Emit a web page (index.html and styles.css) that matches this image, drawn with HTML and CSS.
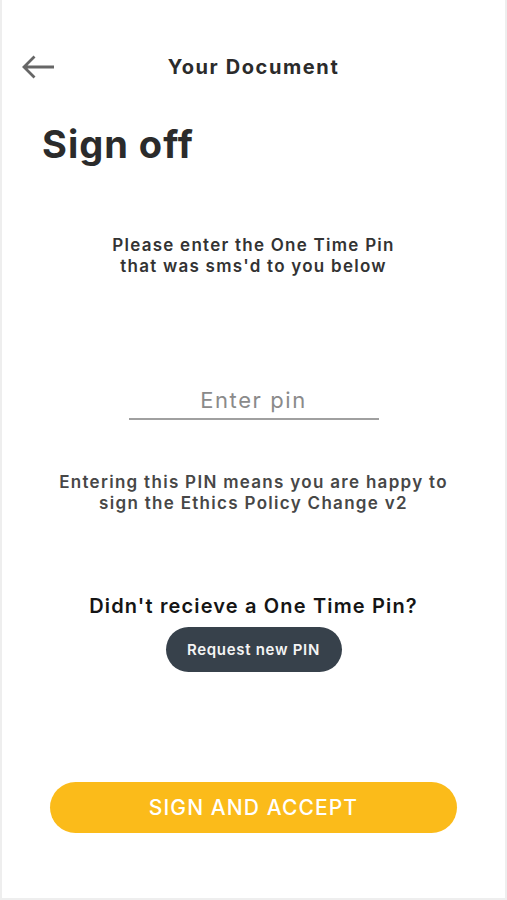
FILE: index.html
```html
<!DOCTYPE html>
<html lang="en">
<head>
    <meta charset="UTF-8">
    <meta name="viewport" content="width=device-width, initial-scale=1.0">
    <title>Sign off</title>
    <link rel="stylesheet" href="styles.css">
</head>
<body>
    <div class="screen">
        <header class="topbar">
            <button class="back" aria-label="Back">
                <svg width="32" height="24" viewBox="0 0 32 24">
                    <path d="M32 12H2.5M12.5 1.5L2 12l10.5 10.5" fill="none" stroke="#666" stroke-width="2.8"/>
                </svg>
            </button>
            <h1 class="topbar-title">Your Document</h1>
            <span class="spacer"></span>
        </header>

        <h2 class="page-title">Sign off</h2>

        <p class="intro">Please enter the One Time Pin<br>that was sms'd to you below</p>

        <div class="pin-field">
            <input type="text" id="pin" placeholder="Enter pin">
        </div>

        <p class="notice">Entering this PIN means you are happy to<br>sign the Ethics Policy Change v2</p>

        <p class="resend-label">Didn't recieve a One Time Pin?</p>
        <button class="resend">Request new PIN</button>

        <button class="accept">SIGN AND ACCEPT</button>
    </div>
</body>
</html>
```

FILE: styles.css
```css
* {
    margin: 0;
    padding: 0;
    box-sizing: border-box;
}

body {
    background: #fff;
    font-family: Inter, 'Liberation Sans', sans-serif;
    color: #333;
}

.screen {
    width: 507px;
    height: 900px;
    border: 2px solid #eeeeee;
    border-top: none;
    display: flex;
    flex-direction: column;
    align-items: center;
}

.topbar {
    width: 100%;
    display: flex;
    align-items: center;
    justify-content: space-between;
    padding: 55px 20px 0 20px;
}

.back {
    background: none;
    border: none;
    width: 34px;
    height: 24px;
    display: flex;
    align-items: center;
}

.spacer {
    width: 34px;
}

.topbar-title {
    font-size: 20px;
    line-height: 23px;
    font-weight: 700;
    letter-spacing: 1.6px;
    color: #2b2b2b;
}

.page-title {
    align-self: flex-start;
    margin: 42px 0 0 40px;
    font-size: 38px;
    line-height: 46px;
    font-weight: 700;
    letter-spacing: 1px;
    color: #2b2b2b;
}

.intro {
    margin-top: 68px;
    text-align: center;
    font-size: 17px;
    font-weight: 600;
    line-height: 21px;
    letter-spacing: 1.25px;
    color: #333;
}

.pin-field {
    margin-top: 105px;
    width: 250px;
    border-bottom: 2px solid #a0a0a0;
}

.pin-field input {
    display: block;
    width: 100%;
    height: 36px;
    border: none;
    outline: none;
    background: transparent;
    text-align: center;
    font-family: inherit;
    font-size: 22px;
    line-height: 36px;
    letter-spacing: 1.6px;
    color: #333;
}

.pin-field input::placeholder {
    color: #8a8a8a;
}

.notice {
    margin-top: 52px;
    text-align: center;
    font-size: 17px;
    font-weight: 600;
    line-height: 21px;
    letter-spacing: 1.3px;
    color: #474747;
}

.resend-label {
    margin-top: 80px;
    font-size: 20px;
    font-weight: 600;
    line-height: 24px;
    letter-spacing: 1.15px;
    color: #151515;
}

.resend {
    margin-top: 9px;
    width: 176px;
    height: 45px;
    border: none;
    border-radius: 23px;
    background: #37414b;
    color: #f4f4f4;
    font-family: inherit;
    font-size: 15px;
    font-weight: 600;
    letter-spacing: 0.7px;
}

.accept {
    margin-top: 110px;
    width: 407px;
    height: 51px;
    border: none;
    border-radius: 26px;
    background: #fbbb1a;
    color: #fff;
    font-family: inherit;
    font-size: 21px;
    font-weight: 500;
    letter-spacing: 1.1px;
}
```
